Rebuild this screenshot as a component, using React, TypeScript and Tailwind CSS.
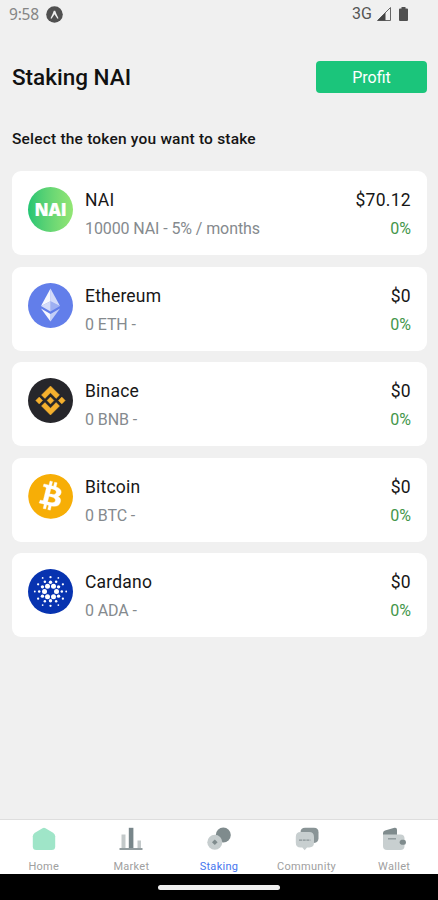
import type { ReactNode } from "react";
import { SiBitcoin } from "react-icons/si";

type Token = {
  name: string;
  detail: string;
  price: string;
  change: string;
  icon: ReactNode;
};

function NaiIcon() {
  return (
    <div className="flex h-[45px] w-[45px] items-center justify-center rounded-full bg-linear-to-r from-[#1fc573] to-[#93e674]">
      <span className="font-['Open_Sans',sans-serif] text-[17px] font-extrabold leading-none tracking-[-0.2px] text-white [-webkit-text-stroke:0.2px_white]">NAI</span>
    </div>
  );
}

function EthereumIcon() {
  return (
    <svg viewBox="0 0 45 45" className="h-[45px] w-[45px]">
      <circle cx="22.5" cy="22.5" r="22.5" fill="#627eea" />
      <path d="M22.5 5.5v12.7L13 23z" fill="#fff" fillOpacity=".95" />
      <path d="M22.5 5.5v12.7L32 23z" fill="#fff" fillOpacity=".72" />
      <path d="M13 23l9.5-4.8v10.3z" fill="#fff" fillOpacity=".72" />
      <path d="M32 23l-9.5-4.8v10.3z" fill="#fff" fillOpacity=".38" />
      <path d="M13 25.6l9.5 5.3v7.6z" fill="#fff" fillOpacity=".95" />
      <path d="M32 25.6l-9.5 5.3v7.6z" fill="#fff" fillOpacity=".62" />
    </svg>
  );
}

function BinanceIcon() {
  return (
    <svg viewBox="0 0 45 45" className="h-[45px] w-[45px]">
      <circle cx="22.5" cy="22.5" r="22.5" fill="#26262b" />
      <g fill="#f5b02e" stroke="#f5b02e" strokeWidth=".5">
        <path d="M22.5 8l9 9-3.4 3.4-5.6-5.6-5.6 5.6-3.4-3.4z" />
        <path d="M22.5 37l9-9-3.4-3.4-5.6 5.6-5.6-5.6-3.4 3.4z" />
        <path d="M11.2 19.1l3.4 3.4-3.4 3.4-3.4-3.4z" />
        <path d="M33.8 19.1l3.4 3.4-3.4 3.4-3.4-3.4z" />
        <path d="M22.5 19.1l3.4 3.4-3.4 3.4-3.4-3.4z" />
      </g>
    </svg>
  );
}

function BitcoinIcon() {
  return (
    <div className="flex h-[45px] w-[45px] items-center justify-center overflow-hidden rounded-full bg-white">
      <SiBitcoin className="h-[46px] w-[46px] shrink-0 stroke-white text-[#f7ae06] [stroke-width:0.2px]" />
    </div>
  );
}

// rings of dots: count, distance from the centre, dot radius, starting angle
const RINGS = [
  [6, 6, 2.5, 0],
  [6, 9.3, 1.7, 30],
  [6, 11.3, 1.25, 0],
  [6, 14.3, 1.15, 30],
  [6, 15.7, 0.9, 0],
];

function CardanoIcon() {
  return (
    <svg viewBox="-22.5 -22.5 45 45" className="h-[45px] w-[45px]">
      <circle r="22.5" fill="#0733b0" />
      {RINGS.map(([count, dist, r, start]) =>
        Array.from({ length: count }, (_, i) => {
          const a = ((start + (360 / count) * i) * Math.PI) / 180;
          return <circle key={`${dist}-${i}`} cx={dist * Math.cos(a)} cy={dist * Math.sin(a)} r={r} fill="#fff" />;
        })
      )}
    </svg>
  );
}

const tokens: Token[] = [
  { name: "NAI", detail: "10000 NAI - 5% / months", price: "$70.12", change: "0%", icon: <NaiIcon /> },
  { name: "Ethereum", detail: "0 ETH -", price: "$0", change: "0%", icon: <EthereumIcon /> },
  { name: "Binace", detail: "0 BNB -", price: "$0", change: "0%", icon: <BinanceIcon /> },
  { name: "Bitcoin", detail: "0 BTC -", price: "$0", change: "0%", icon: <BitcoinIcon /> },
  { name: "Cardano", detail: "0 ADA -", price: "$0", change: "0%", icon: <CardanoIcon /> },
];

const tabs = [
  {
    label: "Home",
    icon: <path d="M10.5 1.2q1.5-.9 3 0l7.6 4.6q1.9 1.2 2.1 3.4v10.3q0 3.5-3.5 3.5H4.3Q.8 23 .8 19.5V9.2Q1 7 2.9 5.8z" fill="#9fe5c8" />,
  },
  {
    label: "Market",
    icon: (
      <>
        <path d="M2.5 7.5h4V22h-4zM18.5 13.5H22V22h-3.5z" fill="#c3c9ca" />
        <path d="M9.8.8h4.6V22H9.8z" fill="#78868a" />
        <path d="M.5 21h23v2H.5z" fill="#929c9f" />
      </>
    ),
  },
  {
    label: "Staking",
    active: true,
    icon: (
      <>
        <circle cx="16.3" cy="8" r="7.5" fill="#7f8b8d" />
        <circle cx="7.8" cy="15.3" r="7.5" fill="#c6cdce" />
        <path d="M7.8 12.5l2.8 2.8-2.8 2.8L5 15.3z" fill="#7f8b8d" />
      </>
    ),
  },
  {
    label: "Community",
    icon: (
      <>
        <path d="M10 .8h9q4.5 0 4.5 4.5v6q0 4-4.5 4.7H10q-4.5 0-4.5-4.5V5.3Q5.5.8 10 .8z" fill="#899496" />
        <path d="M5.5 5h8.7q4.8 0 4.8 5v5.5q0 4.8-4.6 5H12l-2.3 2.8-2.4-2.8H5.5q-4.7 0-4.7-5V10q0-5 4.7-5z" fill="#c8cfd0" />
        <path d="M4 13.2h11.5" stroke="#899496" strokeWidth="1.3" strokeDasharray="3 .7" />
      </>
    ),
  },
  {
    label: "Wallet",
    icon: (
      <>
        <path d="M1 8.5V6q0-2 2-2.5L12.5.8q2.5-.4 2.5 2v5.7z" fill="#7f8b8d" />
        <path d="M1 7.5h17.5q4 0 4 4V19q0 4-4 4H5q-4 0-4-4z" fill="#c8cfd0" />
        <path d="M6 11.8h8" stroke="#899496" strokeWidth="1.3" />
        <path d="M19.5 12.8H22q2 0 2 2.5t-2 2.5h-2.5q-2-.6-2-2.5t2-2.5z" fill="#7f8b8d" />
      </>
    ),
  },
];

function StatusBar() {
  return (
    <div className="flex h-7 items-center justify-between pl-[9px] pr-[30px]">
      <div className="flex items-center gap-[7px]">
        <span className="font-['Noto_Sans',sans-serif] text-[15.5px] leading-5 tracking-[-0.2px] text-[#858585]">9:58</span>
        <svg viewBox="0 0 17 17" className="h-[17px] w-[17px]">
          <circle cx="8.5" cy="8.5" r="8.3" fill="#505050" />
          <path d="M4.5 12.2Q6.8 8 7.8 4.8h1.4q1 3.2 3.3 7.4l-1 .5Q9.8 10.5 8.5 8.3 7.2 10.5 5.5 12.7z" fill="#efefef" />
        </svg>
      </div>
      <div className="flex items-center">
        <span className="text-[16px] leading-5 text-[#555]">3G</span>
        <svg viewBox="0 0 14 14" className="ml-[5px] h-[14px] w-[14px]">
          <path d="M.5 13.5l13-13v13z" fill="none" stroke="#666" strokeWidth="1" />
          <path d="M.5 13.5l8-8v8z" fill="#444" />
        </svg>
        <svg viewBox="0 0 9 14" className="ml-[8px] h-[14px] w-[9px]">
          <path d="M2.5 0h4v1.5H8q1 0 1 1V13q0 1-1 1H1q-1 0-1-1V2.5q0-1 1-1h1.5z" fill="#505050" />
        </svg>
      </div>
    </div>
  );
}

function TokenCard({ token }: { token: Token }) {
  return (
    <div className="flex h-[84px] items-start rounded-[9px] bg-white px-4 pt-4">
      {token.icon}
      <div className="-mt-px ml-3 flex-1">
        <div className="h-[29px] text-[17.5px] font-[450] leading-7 tracking-[0.2px] text-[#171717]">{token.name}</div>
        <div className="h-7 text-[16px] leading-7 tracking-[-0.1px] text-[#858a8e]">{token.detail}</div>
      </div>
      <div className="-mt-px text-right">
        <div className="h-[29px] text-[17.5px] font-[450] leading-7 tracking-[0.3px] text-[#171717]">{token.price}</div>
        <div className="h-7 text-[16px] leading-7 text-[#43964a]">{token.change}</div>
      </div>
    </div>
  );
}

export default function App() {
  return (
    <div className="flex h-[900px] w-[438px] flex-col overflow-hidden bg-[#f0f0f0] font-[Roboto,sans-serif]">
      <StatusBar />

      {/* Header */}
      <div className="flex h-[66px] items-start justify-between pl-3 pr-[11px] pt-[33px]">
        <h1 className="text-[22.5px] font-medium leading-8 text-[#111]">Staking NAI</h1>
        <button className="h-8 w-[111px] rounded-[4px] bg-[#1bc57b] pt-0.5 text-[16px] leading-[30px] text-white">Profit</button>
      </div>
      <p className="pl-3 pt-[35px] text-[15.5px] font-medium leading-5 tracking-[0.2px] text-[#151515]">Select the token you want to stake</p>

      {/* Token list */}
      <div className="flex flex-1 flex-col gap-[11.6px] pl-3 pr-[11px] pt-[22px]">
        {tokens.map((token) => (
          <TokenCard key={token.name} token={token} />
        ))}
      </div>

      {/* Bottom tabs */}
      <div className="grid h-[55px] grid-cols-5 border-t border-[#dedede] bg-white">
        {tabs.map((tab) => (
          <div key={tab.label} className="flex flex-col items-center pt-[7px]">
            <svg viewBox="0 0 24 24" className="h-6 w-6">{tab.icon}</svg>
            <span className={`mt-[9px] text-[11px] leading-[14px] tracking-[0.3px] ${tab.active ? "text-[#4676ee]" : "text-[#a0a0a0]"}`}>
              {tab.label}
            </span>
          </div>
        ))}
      </div>

      <div className="flex h-[26px] justify-center bg-black pt-[11px]">
        <div className="h-[5px] w-[122px] rounded-full bg-[#eee]" />
      </div>
    </div>
  );
}
